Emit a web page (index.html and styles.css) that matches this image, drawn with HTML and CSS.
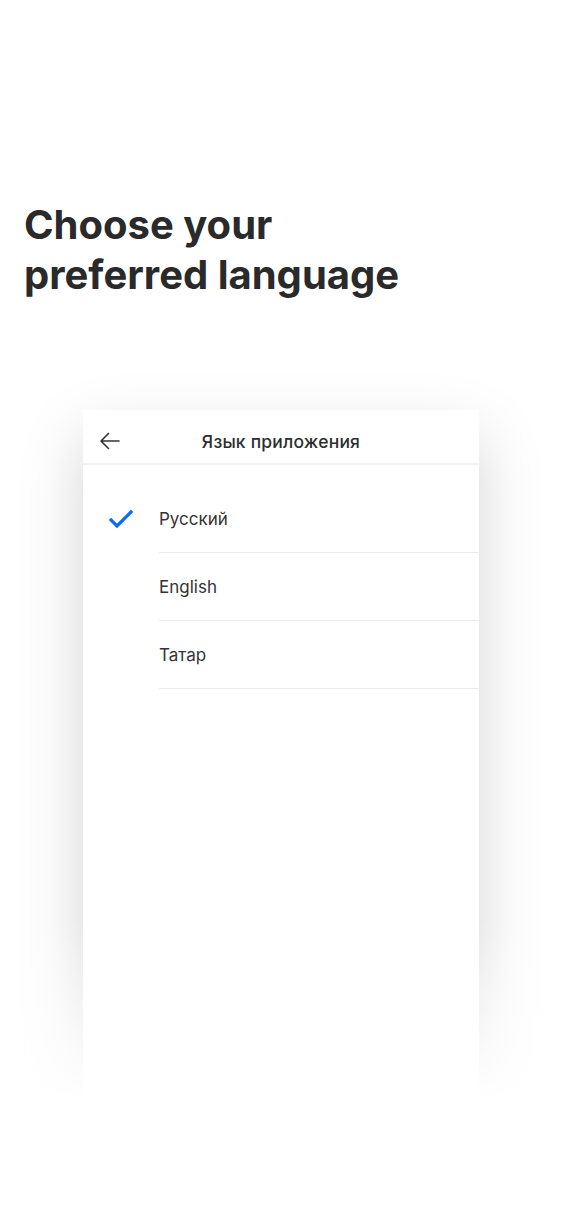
FILE: index.html
```html
<!DOCTYPE html>
<html lang="en">
<head>
<meta charset="utf-8">
<title>Choose your preferred language</title>
<link rel="stylesheet" href="styles.css">
</head>
<body>
<main class="page">
  <h1 class="headline">Choose your<br>preferred language</h1>
  <section class="stage">
    <div class="phone">
      <header class="bar">
        <svg class="back" width="22" height="18" viewBox="0 0 22 18" aria-hidden="true">
          <path d="M20 9H2.5M9.5 1.5L2 9l7.5 7.5" fill="none" stroke="#333" stroke-width="1.6" stroke-linecap="round" stroke-linejoin="round"/>
        </svg>
        <div class="bar-title">Язык приложения</div>
      </header>
      <ul class="langs">
        <li class="lang">
          <span class="mark">
            <svg width="24" height="18" viewBox="0 0 24 18" aria-hidden="true">
              <path d="M2 10l6 6L22 2" fill="none" stroke="#0a6cf2" stroke-width="3.2" stroke-linecap="square"/>
            </svg>
          </span>
          <span class="lang-name">Русский</span>
        </li>
        <li class="lang">
          <span class="mark"></span>
          <span class="lang-name">English</span>
        </li>
        <li class="lang">
          <span class="mark"></span>
          <span class="lang-name">Татар</span>
        </li>
      </ul>
    </div>
    <div class="fade"></div>
  </section>
</main>
</body>
</html>
```

FILE: styles.css
```css
* { box-sizing: border-box; }
html, body { margin: 0; padding: 0; background: #fff; }
body {
  font-family: Inter, "Noto Sans", "Liberation Sans", sans-serif;
  color: #2b2b2b;
  width: 563px;
  height: 1218px;
  overflow: hidden;
}
.page {
  display: flex;
  flex-direction: column;
  padding-top: 200px;
}
.headline {
  margin: 0 0 0 24px;
  font-size: 40px;
  line-height: 50px;
  font-weight: 700;
  letter-spacing: 0;
  color: #2a2a2a;
}
.stage {
  position: relative;
  margin-top: 110px;
  padding: 0 84px 0 83px;
  height: 810px;
}
.phone {
  background: #fff;
  height: 740px;
  box-shadow: 0 26px 60px rgba(0, 0, 0, 0.17);
  display: flex;
  flex-direction: column;
}
.bar {
  height: 55px;
  border-bottom: 2px solid #f1f1f1;
  display: flex;
  align-items: center;
  padding-left: 16px;
  padding-top: 9px;
}
.back { display: block; }
.bar-title {
  flex: 1;
  text-align: center;
  font-size: 17.5px;
  font-weight: 500;
  color: #2e2e2e;
  margin-right: 38px;
  letter-spacing: 0.2px;
}
.langs {
  list-style: none;
  margin: 0;
  padding: 20px 0 0 0;
}
.lang {
  display: flex;
  align-items: center;
  height: 68px;
}
.mark {
  width: 76px;
  display: flex;
  padding-left: 26px;
  align-self: stretch;
  align-items: center;
}
.mark svg { display: block; }
.lang-name {
  flex: 1;
  align-self: stretch;
  display: flex;
  align-items: center;
  font-size: 17px;
  color: #333;
  border-bottom: 1px solid #ebebeb;
}
.fade {
  position: absolute;
  left: 0;
  right: 0;
  top: 510px;
  height: 300px;
  background: linear-gradient(to bottom, rgba(255,255,255,0) 0%, rgba(255,255,255,0.6) 36%, #fff 60%, #fff 100%);
}
```
